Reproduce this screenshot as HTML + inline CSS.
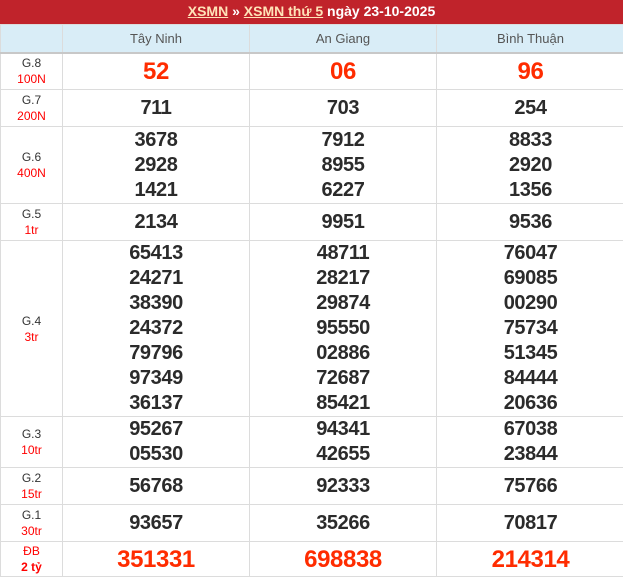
<!DOCTYPE html>
<html><head><meta charset="utf-8"><style>
*{margin:0;padding:0;box-sizing:border-box}
body{width:623px;height:577px;overflow:hidden;background:#fff;font-family:"Liberation Sans",Arial,sans-serif}
.top{height:24px;background:#c0232b;color:#fff;text-align:center;font-weight:bold;font-size:14px;line-height:23px}
.top a{color:#ffe3b8;text-decoration:underline}
table{border-collapse:collapse;table-layout:fixed;width:624px}
td{border:1px solid #dcdcdc;text-align:center;vertical-align:middle;padding:0}
tr.h td{background:#d9edf7;color:#555;font-size:13px;border-bottom:2px solid #c8c8c8}
td.l{font-size:12px;color:#333;line-height:16px}
td.l span{color:#f00;display:block}
.n{font-size:20px;font-weight:bold;color:#2b2b2b;line-height:25px;letter-spacing:-0.4px}
.r{color:#ff2c00;font-size:24px}
td.l b{color:#f00;display:block}
</style></head><body>
<div class="top"><a>XSMN</a> » <a>XSMN thứ 5</a> ngày 23-10-2025</div>
<table>
<col style="width:62px"><col style="width:187px"><col style="width:187px"><col style="width:188px">
<tr class="h" style="height:28px"><td></td><td>Tây Ninh</td><td>An Giang</td><td>Bình Thuận</td></tr>
<tr style="height:37px"><td class="l">G.8<span>100N</span></td><td class="n r">52</td><td class="n r">06</td><td class="n r">96</td></tr>
<tr style="height:37px"><td class="l">G.7<span>200N</span></td><td class="n">711</td><td class="n">703</td><td class="n">254</td></tr>
<tr style="height:77px"><td class="l">G.6<span>400N</span></td><td class="n">3678<br>2928<br>1421</td><td class="n">7912<br>8955<br>6227</td><td class="n">8833<br>2920<br>1356</td></tr>
<tr style="height:37px"><td class="l">G.5<span>1tr</span></td><td class="n">2134</td><td class="n">9951</td><td class="n">9536</td></tr>
<tr style="height:176px"><td class="l">G.4<span>3tr</span></td><td class="n">65413<br>24271<br>38390<br>24372<br>79796<br>97349<br>36137</td><td class="n">48711<br>28217<br>29874<br>95550<br>02886<br>72687<br>85421</td><td class="n">76047<br>69085<br>00290<br>75734<br>51345<br>84444<br>20636</td></tr>
<tr style="height:51px"><td class="l">G.3<span>10tr</span></td><td class="n">95267<br>05530</td><td class="n">94341<br>42655</td><td class="n">67038<br>23844</td></tr>
<tr style="height:37px"><td class="l">G.2<span>15tr</span></td><td class="n">56768</td><td class="n">92333</td><td class="n">75766</td></tr>
<tr style="height:37px"><td class="l">G.1<span>30tr</span></td><td class="n">93657</td><td class="n">35266</td><td class="n">70817</td></tr>
<tr style="height:35px"><td class="l" style="color:#f00">ĐB<b>2 tỷ</b></td><td class="n r">351331</td><td class="n r">698838</td><td class="n r">214314</td></tr>
</table>
</body></html>
